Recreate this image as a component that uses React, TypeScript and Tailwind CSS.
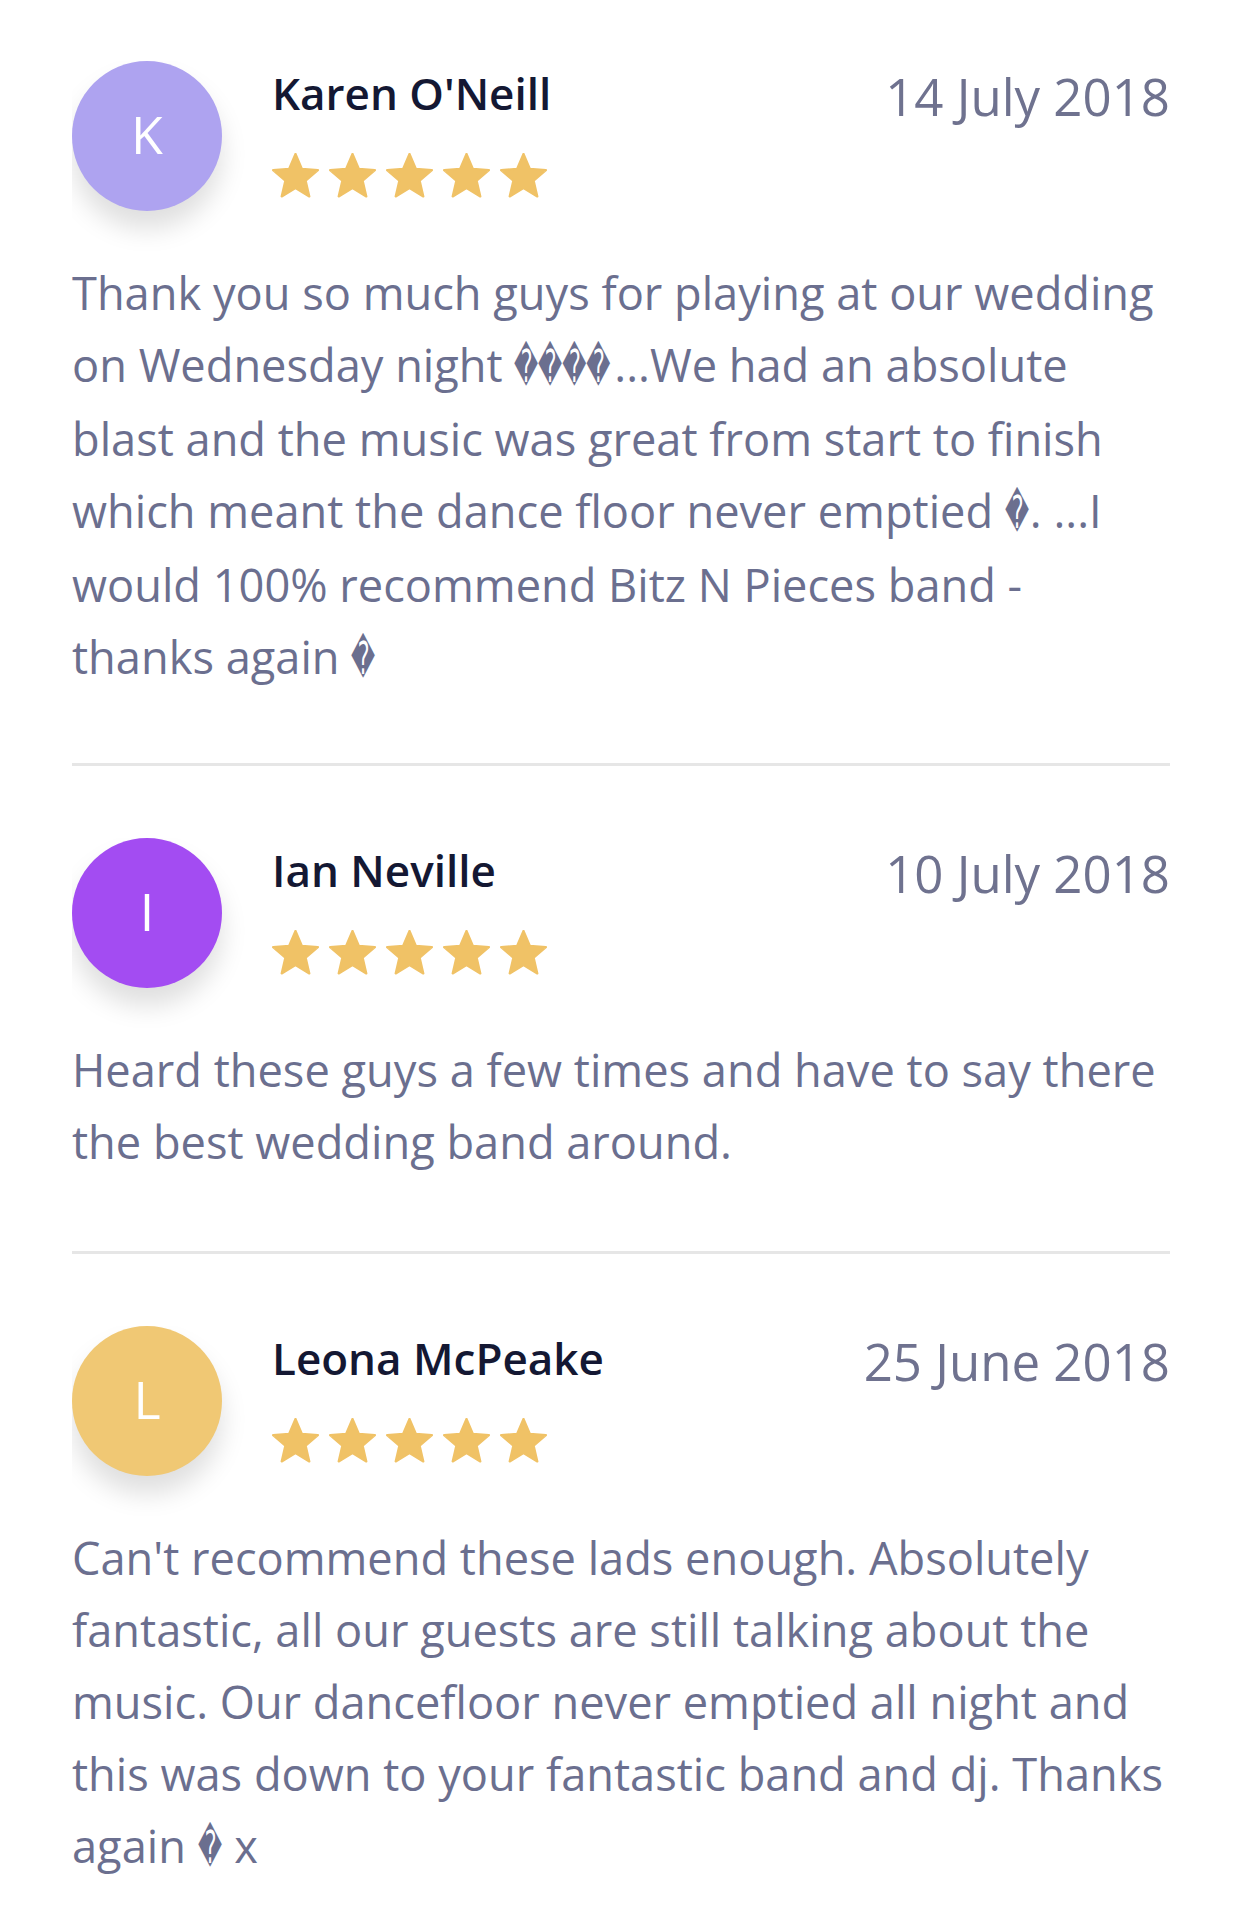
import React from 'react';

type Review = {
  name: string;
  initial: string;
  color: string;
  date: string;
  body: React.ReactNode;
};

// the broken emoji from the feed, drawn narrow like on the phone
const Bad = ({ n = 1 }: { n?: number }) => (
  <span className="inline-block whitespace-nowrap align-baseline" style={{ width: n * 25 }}>
    <span className="inline-block origin-left scale-x-[0.52] font-['DejaVu_Sans',sans-serif]">
      {'\uFFFD'.repeat(n)}
    </span>
  </span>
);

const reviews: Review[] = [
  {
    name: "Karen O'Neill",
    initial: 'K',
    color: 'bg-[#aea3f0]',
    date: '14 July 2018',
    body: (
      <>
        Thank you so much guys for playing at our wedding on Wednesday night <Bad n={4} />...We had an absolute
        blast and the music was great from start to finish which meant the dance floor never emptied <Bad />. ...I
        would 100% recommend Bitz N Pieces band - thanks again <Bad />
      </>
    ),
  },
  {
    name: 'Ian Neville',
    initial: 'I',
    color: 'bg-[#a34cf2]',
    date: '10 July 2018',
    body: <>Heard these guys a few times and have to say there the best wedding band around.</>,
  },
  {
    name: 'Leona McPeake',
    initial: 'L',
    color: 'bg-[#f0c874]',
    date: '25 June 2018',
    body: (
      <>
        Can't recommend these lads enough. Absolutely fantastic, all our guests are still talking about the music.
        Our dancefloor never emptied all night and this was down to your fantastic band and dj. Thanks again{' '}
        <Bad /> x
      </>
    ),
  },
];

const Star = () => (
  <svg width={47} height={45} viewBox="1.5 1.6 21 20.1" fill="#f0c266">
    <path
      d="M12 17.27L18.18 21l-1.64-7.03L22 9.24l-7.19-.61L12 2 9.19 8.63 2 9.24l5.46 4.73L5.82 21z"
      stroke="#f0c266"
      strokeWidth={1}
      strokeLinejoin="round"
    />
  </svg>
);

const ReviewItem = ({ review, first }: { review: Review; first: boolean }) => (
  <div className={first ? 'pb-[68px]' : 'border-t-[3px] border-[#e6e6e6] pt-[72px] pb-[73px]'}>
    <div className="flex items-start">
      {/* shadow is clipped on the left, like the original */}
      <div className="-mb-[50px] -mr-[40px] shrink-0 overflow-hidden pb-[50px] pr-[40px]">
        <div
          className={`flex h-[150px] w-[150px] items-center justify-center rounded-full pb-[4px] ${review.color} shadow-[0_18px_26px_rgba(0,0,0,0.13)]`}
        >
          <span className="text-[52px] leading-none text-white">{review.initial}</span>
        </div>
      </div>
      <div className="ml-[50px] flex-1 pt-[10px]">
        <div className="flex items-start justify-between">
          <span className="text-[44px] font-semibold leading-none text-[#141833]">{review.name}</span>
          <span className="text-[51px] leading-none text-[#6f728f]">{review.date}</span>
        </div>
        <div className="mt-[31px] flex gap-[10px]">
          {[0, 1, 2, 3, 4].map((i) => (
            <Star key={i} />
          ))}
        </div>
      </div>
    </div>
    <p className="mt-[46px] text-[45.2px] leading-[72px] text-[#6b6f8f]">{review.body}</p>
  </div>
);

export default function App() {
  return (
    <div className="min-h-screen bg-white px-[72px] pt-[61px] font-['Open_Sans','DejaVu_Sans',sans-serif]">
      {reviews.map((r, i) => (
        <ReviewItem key={r.name} review={r} first={i === 0} />
      ))}
    </div>
  );
}
